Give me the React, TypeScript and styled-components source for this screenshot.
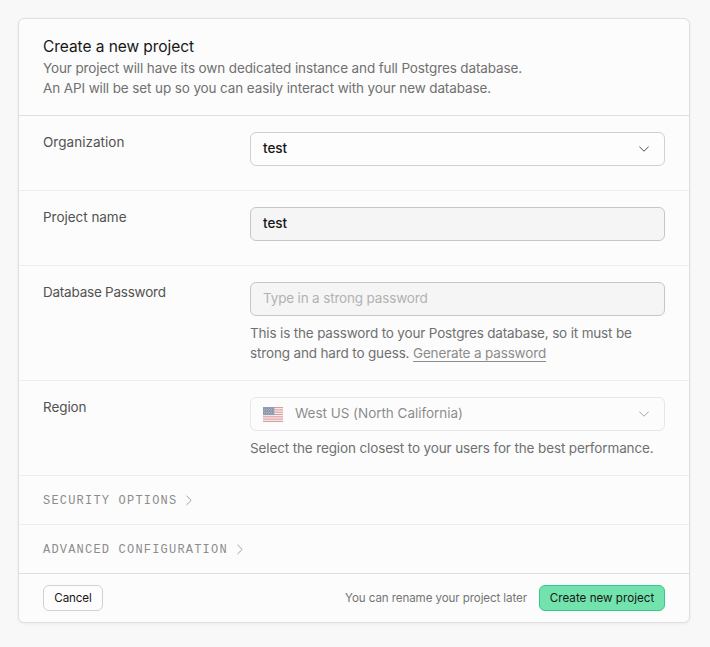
import React from 'react';
import styled, { createGlobalStyle, css } from 'styled-components';

const GlobalStyle = createGlobalStyle`
  *, *::before, *::after { box-sizing: border-box; }
  body {
    margin: 0;
    background: #f8f8f8;
    font-family: Inter, "Liberation Sans", sans-serif;
    font-size: 13.5px;
    line-height: 20px;
    color: #707070;
  }
`;

const Page = styled.main`
  min-height: 647px;
  padding: 18px 20px 24px 18px;
`;

const Panel = styled.form`
  display: flex;
  flex-direction: column;
  background: #fcfcfc;
  border: 1px solid #dfdfdf;
  border-radius: 6px;
  box-shadow: 0 1px 3px rgba(0, 0, 0, 0.06);
`;

const Header = styled.header`
  padding: 16px 24px 17px;
  border-bottom: 1px solid #dfdfdf;
`;

const Title = styled.h1`
  margin: 0 0 -1px;
  font-size: 15.5px;
  font-weight: 400;
  line-height: 24px;
  letter-spacing: -0.06px;
  color: #171717;
`;

/* Letter spacing, in px, for a run of text. */
interface Tracked {
  $track: number;
}

const tracking = css<Tracked>`
  letter-spacing: ${({ $track }) => $track}px;
`;

const Line = styled.span<Tracked>`
  display: block;
  white-space: nowrap;
  ${tracking}
`;

const Row = styled.section`
  display: grid;
  grid-template-columns: 207px 1fr;
  padding: 16px 24px;
  border-bottom: 1px solid #ededed;
`;

const Label = styled.label<Tracked>`
  color: #525252;
  ${tracking}
`;

const Field = styled.div`
  display: flex;
  flex-direction: column;
  gap: 7px;
`;

const Help = styled.div`
  padding-bottom: 1px;
`;

const controlBox = css`
  width: 100%;
  height: 34px;
  padding: 0 12px 2px;
  border-radius: 6px;
  font: inherit;
  font-weight: 500;
  letter-spacing: -0.06px;
  color: #171717;
`;

const Select = styled.button<{ $disabled?: boolean }>`
  ${controlBox}
  display: flex;
  align-items: center;
  background: #fdfdfd;
  border: 1px solid #d1d1d1;
  text-align: left;
  opacity: ${({ $disabled }) => ($disabled ? 0.5 : 1)};
`;

const Value = styled.span`
  flex: 1;
`;

const RegionName = styled.span`
  flex: 1;
  margin-left: 12px;
  font-weight: 400;
  letter-spacing: -0.028px;
`;

const Input = styled.input`
  ${controlBox}
  background: #f5f5f5;
  border: 1px solid #c7c7c7;
  outline: none;

  &::placeholder {
    color: #b2b2b2;
    font-weight: 400;
    letter-spacing: -0.164px;
    opacity: 1;
  }
`;

const Generate = styled.span`
  letter-spacing: -0.16px;
  text-decoration: underline;
  text-decoration-thickness: 1px;
  text-underline-offset: 3px;
  text-decoration-skip-ink: none;
  opacity: 0.8;
`;

const Disclosure = styled.button<{ $last?: boolean }>`
  display: flex;
  align-items: center;
  gap: 7px;
  height: 49px;
  padding: 2px 24px 0;
  background: none;
  border: 0;
  border-bottom: 1px solid ${({ $last }) => ($last ? '#dfdfdf' : '#ededed')};
  font-family: "Liberation Mono", monospace;
  font-size: 12px;
  letter-spacing: 1.2px;
  text-transform: uppercase;
  color: #8c8c8c;
`;

const Footer = styled.footer`
  display: flex;
  align-items: center;
  height: 48px;
  padding: 0 24px;
`;

const Note = styled.span`
  margin: 0 12px 0 auto;
  font-size: 11.6px;
  letter-spacing: -0.1px;
  color: #757575;
`;

const Button = styled.button<{ $primary?: boolean }>`
  height: 26px;
  width: ${({ $primary }) => ($primary ? 126 : 60)}px;
  padding: 0;
  border: 1px solid ${({ $primary }) => ($primary ? '#36c78b' : '#d1d1d1')};
  border-radius: 6px;
  background: ${({ $primary }) => ($primary ? '#72e3ad' : '#fdfdfd')};
  font-family: inherit;
  font-size: 11.6px;
  line-height: 16px;
  letter-spacing: ${({ $primary }) => ($primary ? 0.02 : -0.09)}px;
  color: #171717;
`;

const FlagSvg = styled.svg`
  flex: none;
  margin: 2px 0 0;
`;

const ChevronSvg = styled.svg`
  flex: none;
  fill: none;
  stroke: currentColor;
`;

function ChevronDown() {
  return (
    <ChevronSvg width="16" height="16" viewBox="0 0 16 16" strokeWidth="0.75">
      <path d="M3.4 6.7 8 11.2l4.6-4.5" />
    </ChevronSvg>
  );
}

function ChevronRight() {
  return (
    <ChevronSvg width="10" height="12" viewBox="0 0 10 12" strokeWidth="0.8">
      <path d="M2.5 .8 7.2 5.4l-4.7 4.6" />
    </ChevronSvg>
  );
}

function Flag() {
  const stripes = [0, 2, 4, 6, 8, 10, 12];
  const stars = [0, 1, 2, 3, 4].flatMap((r) =>
    [0, 1, 2, 3, 4].map((c) => [1 + c * 2.3 + (r % 2) * 0.8, 0.9 + r * 1.5]),
  );
  return (
    <FlagSvg width="20" height="15" viewBox="0 0 20 15">
      <rect width="20" height="15" fill="#f5f0f0" />
      {stripes.map((n) => (
        <rect key={n} y={(n * 15) / 13} width="20" height={15 / 13} fill="#bd3d44" />
      ))}
      <rect width="11.4" height="8.08" fill="#192f5d" />
      {stars.map(([x, y]) => (
        <circle key={`${x}-${y}`} cx={x} cy={y} r="0.4" fill="#fff" />
      ))}
    </FlagSvg>
  );
}

export default function App() {
  return (
    <>
      <GlobalStyle />
      <Page>
        <Panel>
          <Header>
            <Title>Create a new project</Title>
            <Line $track={-0.121}>
              Your project will have its own dedicated instance and full Postgres database.
            </Line>
            <Line $track={-0.117}>
              An API will be set up so you can easily interact with your new database.
            </Line>
          </Header>

          <Row>
            <Label $track={0.035}>Organization</Label>
            <Field>
              <Select type="button">
                <Value>test</Value>
                <ChevronDown />
              </Select>
              <Help />
            </Field>
          </Row>

          <Row>
            <Label $track={-0.033}>Project name</Label>
            <Field>
              <Input defaultValue="test" />
              <Help />
            </Field>
          </Row>

          <Row>
            <Label $track={-0.23}>Database Password</Label>
            <Field>
              <Input type="password" placeholder="Type in a strong password" />
              <Help>
                <Line $track={-0.168}>
                  This is the password to your Postgres database, so it must be
                </Line>
                <Line $track={-0.15}>
                  strong and hard to guess. <Generate>Generate a password</Generate>
                </Line>
              </Help>
            </Field>
          </Row>

          <Row>
            <Label $track={-0.08}>Region</Label>
            <Field>
              <Select type="button" $disabled>
                <Flag />
                <RegionName>West US (North California)</RegionName>
                <ChevronDown />
              </Select>
              <Help>
                <Line $track={-0.131}>
                  Select the region closest to your users for the best performance.
                </Line>
              </Help>
            </Field>
          </Row>

          <Disclosure type="button">
            Security options
            <ChevronRight />
          </Disclosure>
          <Disclosure type="button" $last>
            Advanced configuration
            <ChevronRight />
          </Disclosure>

          <Footer>
            <Button type="button">Cancel</Button>
            <Note>You can rename your project later</Note>
            <Button type="button" $primary>
              Create new project
            </Button>
          </Footer>
        </Panel>
      </Page>
    </>
  );
}
